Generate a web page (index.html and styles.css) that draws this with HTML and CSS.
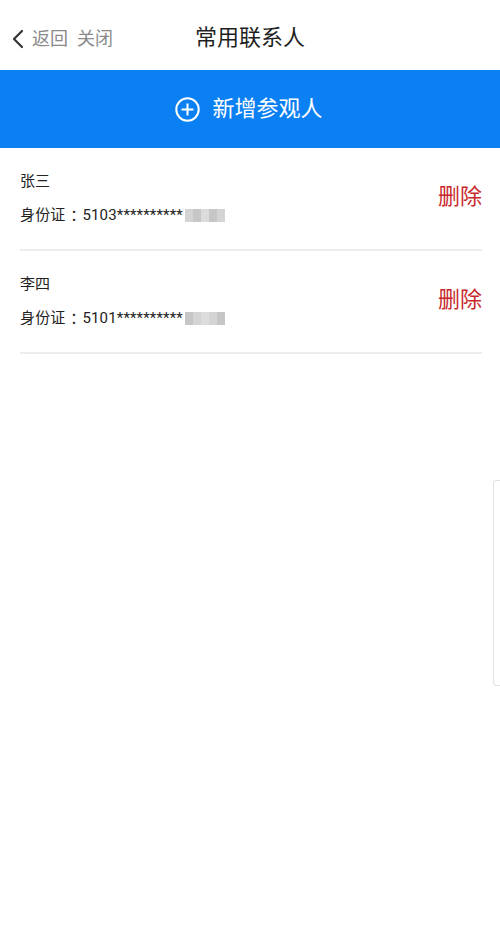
FILE: index.html
```html
<!DOCTYPE html>
<html lang="zh-CN">
<head>
<meta charset="utf-8">
<title>常用联系人</title>
<link rel="stylesheet" href="styles.css">
</head>
<body>
<div class="page">
  <header class="topbar">
    <div class="nav-left">
      <svg class="chev" width="12" height="20" viewBox="0 0 12 20"><path d="M10 2 L2 10 L10 18" fill="none" stroke="#333" stroke-width="2.2" stroke-linecap="round" stroke-linejoin="round"/></svg>
      <span class="nav-link">返回</span>
      <span class="nav-link">关闭</span>
    </div>
    <h1 class="title">常用联系人</h1>
  </header>
  <div class="add-bar">
    <svg class="plus" width="25" height="25" viewBox="0 0 25 25"><circle cx="12.5" cy="12.5" r="11.2" fill="none" stroke="#fff" stroke-width="2"/><path d="M12.5 6.5 V18.5 M6.5 12.5 H18.5" stroke="#fff" stroke-width="2"/></svg>
    <span class="add-text">新增参观人</span>
  </div>
  <ul class="list">
    <li class="item">
      <div class="info">
        <div class="name">张三</div>
        <div class="idline">身份证<span class="colon">：</span>5103**********<span class="mosaic"><i class="m1"></i><i class="m2"></i><i class="m3"></i><i class="m2"></i><i class="m1"></i></span></div>
      </div>
      <span class="del">删除</span>
    </li>
    <li class="item">
      <div class="info">
        <div class="name">李四</div>
        <div class="idline">身份证<span class="colon">：</span>5101**********<span class="mosaic"><i class="m2"></i><i class="m1"></i><i class="m3"></i><i class="m1"></i><i class="m2"></i></span></div>
      </div>
      <span class="del">删除</span>
    </li>
  </ul>
  <div class="side-handle"></div>
</div>
</body>
</html>
```
FILE: styles.css
```css
* { box-sizing: border-box; }
html, body { margin: 0; padding: 0; background: #fff; }
body {
  font-family: "Roboto", "Noto Sans CJK SC", sans-serif;
  color: #222;
}
.page { position: relative; width: 500px; height: 942px; overflow: hidden; }
.topbar {
  position: relative;
  height: 70px;
  display: flex;
  align-items: center;
  justify-content: center;
}
.nav-left {
  position: absolute;
  left: 12px;
  top: 27px;
  display: flex;
  align-items: center;
  gap: 9px;
}
.chev { display: block; margin-right: -1px; }
.nav-link { font-size: 18px; line-height: 24px; color: #8a8a8a; }
.title {
  margin: 0;
  font-size: 22px;
  font-weight: 400;
  color: #1f1f1f;
  line-height: 30px;
  margin-top: 6px;
}
.add-bar {
  height: 78px;
  background: #0b80f3;
  display: flex;
  align-items: center;
  justify-content: center;
  gap: 12px;
  padding-right: 2px;
}
.plus { display: block; }
.add-text { font-size: 22px; color: #fff; line-height: 30px; }
.list { list-style: none; margin: 0; padding: 0 18px 0 20px; }
.item {
  display: flex;
  align-items: center;
  justify-content: space-between;
  padding: 23px 0 24px;
  border-bottom: 2px solid #ececec;
}
.name { font-size: 15px; line-height: 20px; color: #222; }
.idline {
  margin-top: 14px;
  font-size: 15px;
  line-height: 20px;
  color: #222;
  display: flex;
  align-items: center;
  letter-spacing: 0.15px;
}
.colon {
  font-family: "Noto Sans CJK TC", sans-serif;
  display: inline-block;
  width: 17px;
  text-align: center;
}
.mosaic { display: inline-flex; height: 13px; margin-left: 2px; }
.mosaic i { display: block; width: 8px; height: 13px; }
.m1 { background: #d4d4d4; }
.m2 { background: #c6c6c6; }
.m3 { background: #dcdcdc; }
.del { font-size: 22px; color: #c8282c; line-height: 28px; margin-top: -2px; }
.side-handle {
  position: absolute;
  right: 0;
  top: 480px;
  width: 7px;
  height: 206px;
  border: 1px solid #e2e2e2;
  border-right: none;
  border-radius: 4px 0 0 4px;
}
```
